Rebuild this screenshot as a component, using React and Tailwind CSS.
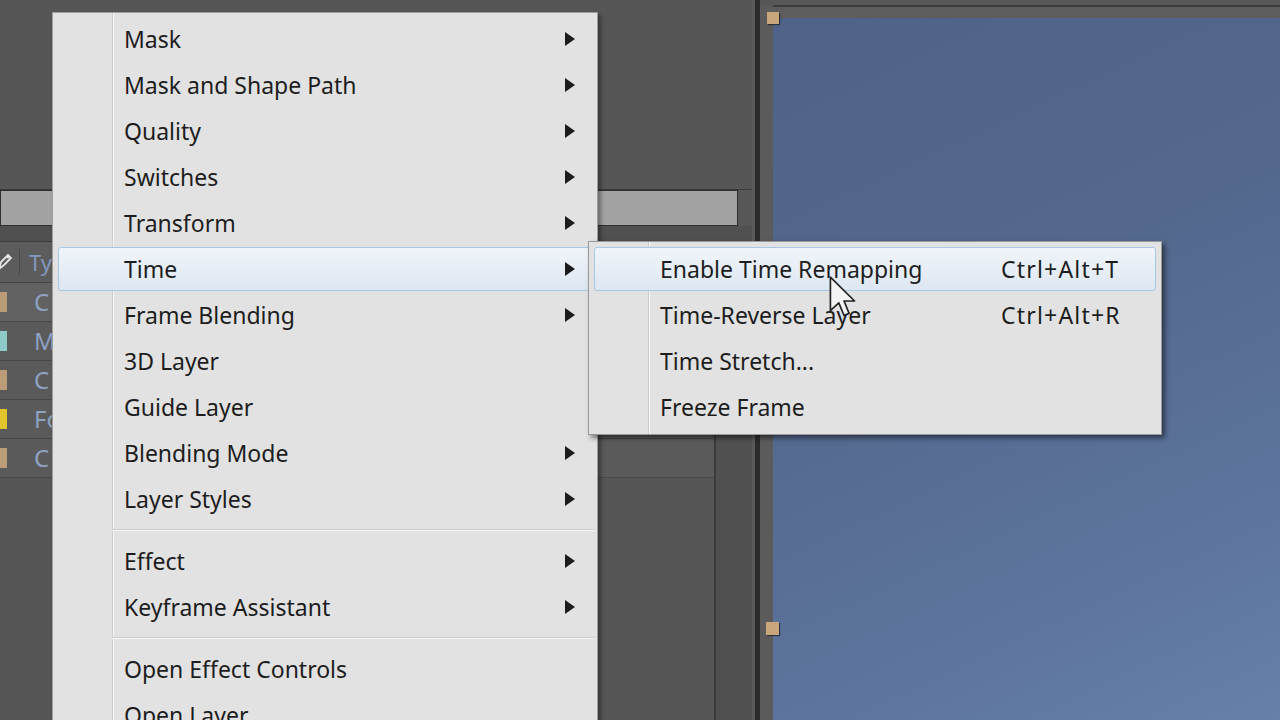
import React from "react";

const Arrow = () => (
  <svg width="10" height="14" viewBox="0 0 10 14" className="shrink-0">
    <polygon points="0,0 10,7 0,14" fill="#1c1c1c" />
  </svg>
);

const mainItems = [
  { l: "Mask", a: true },
  { l: "Mask and Shape Path", a: true },
  { l: "Quality", a: true },
  { l: "Switches", a: true },
  { l: "Transform", a: true },
  { l: "Time", a: true, h: true },
  { l: "Frame Blending", a: true },
  { l: "3D Layer" },
  { l: "Guide Layer" },
  { l: "Blending Mode", a: true },
  { l: "Layer Styles", a: true },
  "sep",
  { l: "Effect", a: true },
  { l: "Keyframe Assistant", a: true },
  "sep",
  { l: "Open Effect Controls" },
  { l: "Open Layer" },
];

const subItems = [
  { l: "Enable Time Remapping", s: "Ctrl+Alt+T", h: true },
  { l: "Time-Reverse Layer", s: "Ctrl+Alt+R" },
  { l: "Time Stretch..." },
  { l: "Freeze Frame" },
];

const Sep = () => (
  <div className="h-[16px] flex items-center">
    <div className="ml-[59px] mr-[3px] flex-1 h-[2px] border-t border-[#cbcbcb] border-b border-b-[#f6f6f6]" />
  </div>
);

const Row = ({ item, children }) => (
  <div className="h-[46px] px-[5px] py-[1px]">
    <div
      className={
        "h-full rounded-[3px] border flex items-center " +
        (item.h
          ? "border-[#a9c8e8] bg-[linear-gradient(to_bottom,#f1f5fa,#dde7f2)]"
          : "border-transparent")
      }
    >
      {children}
    </div>
  </div>
);

const layers = [
  { c: "#bb9c78", t: "C" },
  { c: "#8fcaca", t: "M" },
  { c: "#bb9c78", t: "C" },
  { c: "#e3c42c", t: "Fo" },
  { c: "#bb9c78", t: "C" },
];

export default function App() {
  return (
    <div className="w-[1280px] h-[720px] relative overflow-hidden bg-[#555555] flex font-['Noto_Sans','Open_Sans',sans-serif]">
      {/* left app area */}
      <div className="w-[752px] h-full flex flex-col">
        <div className="h-[190px] bg-[#565656] border-b border-[#3a3a3a]" />
        <div className="h-[36px] flex bg-[#575757]">
          <div className="w-[738px] h-full bg-[#a3a3a3] border border-[#2f2f2f]" />
        </div>
        <div className="h-[16px] bg-[#505050] border-b border-[#3c3c3c]" />
        <div className="flex-1 flex">
          <div className="w-[716px] flex flex-col border-r-2 border-[#3b3b3b]">
            <div className="h-[41px] bg-[#5c5c5c] border-b border-[#454545] flex items-center">
              <svg width="14" height="18" viewBox="0 0 14 18" className="ml-[-2px]">
                <path d="M1 16 L3 9 L10 2 L13 5 L6 12 Z" fill="none" stroke="#e8e8e8" strokeWidth="1.8" />
                <circle cx="10" cy="4" r="1.5" fill="#e8e8e8" />
              </svg>
              <div className="ml-[7px] w-[1px] h-[26px] bg-[#484848]" />
              <span className="ml-[9px] text-[22px] text-[#8398bb]">Ty</span>
            </div>
            {layers.map((r, i) => (
              <div
                key={i}
                className={
                  "h-[39px] flex items-center border-b border-[#474747] " +
                  (i === 0 ? "bg-[#626262]" : "bg-[#5a5a5a]")
                }
              >
                <div className="w-[7px] h-[20px]" style={{ background: r.c }} />
                <span className="ml-[27px] text-[24px] text-[#8ea2c4]">{r.t}</span>
              </div>
            ))}
            <div className="flex-1 bg-[#565656]" />
          </div>
          <div className="flex-1 bg-[#505050]" />
        </div>
      </div>
      {/* divider */}
      <div className="w-[3px] bg-[#5a5a5a]" />
      <div className="w-[5px] bg-[#2c2c2c]" />
      <div className="w-[13px] bg-[#5b5b5b] flex flex-col">
        <div className="h-[5px] bg-[#575757]" />
      </div>
      {/* comp area */}
      <div className="flex-1 flex flex-col">
        <div className="h-[5px] bg-[#585858]" />
        <div className="h-[2px] bg-[#3d3d3d]" />
        <div className="h-[11px] bg-[#5d5d5d]" />
        <div className="flex-1 bg-[linear-gradient(155deg,#4f6287_0%,#54688e_40%,#5b729b_70%,#6580a9_100%)]" />
      </div>

      {/* handles */}
      <div className="absolute left-[767px] top-[12px] w-[12px] h-[12px] bg-[#c8a77d] shadow-[1px_1px_1px_rgba(0,0,0,0.5)]" />
      <div className="absolute left-[766px] top-[622px] w-[13px] h-[13px] bg-[#c8a77d] shadow-[1px_1px_1px_rgba(0,0,0,0.5)]" />

      {/* main context menu */}
      <div className="absolute left-[52px] top-[12px] w-[546px] h-[740px] border border-[#9d9d9d] bg-[#e2e2e2] bg-[linear-gradient(to_right,transparent_59px,#cdcdcd_59px,#cdcdcd_60px,#f5f5f5_60px,#f5f5f5_61px,transparent_61px)] pt-[3px] shadow-[3px_3px_4px_rgba(0,0,0,0.35)] text-[23px] text-[#1d1d1d]">
        {mainItems.map((it, i) =>
          it === "sep" ? (
            <Sep key={i} />
          ) : (
            <Row key={i} item={it}>
              <div className="flex-1 flex items-center justify-between pl-[65px] pr-[16px]">
                <span>{it.l}</span>
                {it.a && <Arrow />}
              </div>
            </Row>
          )
        )}
      </div>

      {/* submenu */}
      <div className="absolute left-[588px] top-[241px] w-[574px] border border-[#9a9a9a] bg-[#e2e2e2] bg-[linear-gradient(to_right,transparent_59px,#cdcdcd_59px,#cdcdcd_60px,#f5f5f5_60px,#f5f5f5_61px,transparent_61px)] py-[4px] shadow-[3px_3px_5px_rgba(0,0,0,0.5)] text-[23px] text-[#1d1d1d]">
        {subItems.map((it, i) => (
          <Row key={i} item={it}>
            <div className="flex items-center pl-[65px]">
              <span className="w-[341px] shrink-0">{it.l}</span>
              {it.s && <span className="tracking-[1.2px]">{it.s}</span>}
            </div>
          </Row>
        ))}
      </div>

      {/* cursor */}
      <svg
        className="absolute left-[829px] top-[276px]"
        width="28"
        height="42"
        viewBox="0 0 13 20"
      >
        <path
          d="M0.5 0.5 L0.5 16.5 L4.5 12.8 L7 18.8 L9.4 17.8 L7 11.9 L12 11.9 Z"
          fill="#f4f4f4"
          stroke="#222"
          strokeWidth="0.8"
          strokeLinejoin="round"
        />
      </svg>
    </div>
  );
}
